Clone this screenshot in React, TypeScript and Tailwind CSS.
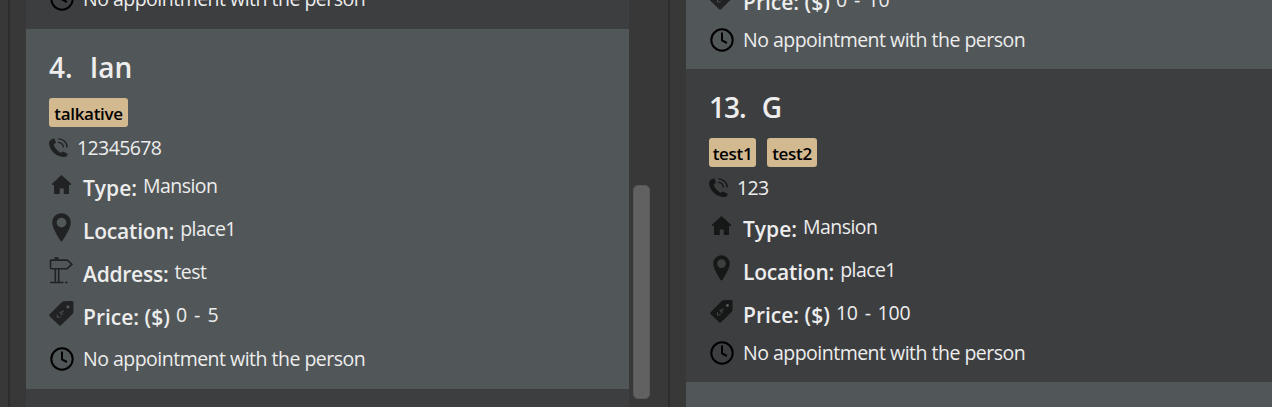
import type { ReactNode } from "react";

type IconProps = { className?: string };

const PhoneIcon = ({ className = "" }: IconProps) => (
  <svg viewBox="0 0 19 19" className={`h-[19px] w-[19px] shrink-0 fill-current ${className}`}>
    <path d="M2.300 1.600 5.300.300 7 4.600 4.800 6.500C5.300 9.600 8.600 13.400 12 14.800l1.900-1.400 4.700 2.300-.3 1.700c-1 1.100-2.300 1.500-3.900 1.500C7.600 18.900.100 12.300.100 5.300.100 3.800.900 2.300 2.300 1.600Z" />
    <path d="M9.300.900c5 .1 8.700 3.600 8.900 8.500M9 4.400c3.100.1 5.200 2.100 5.400 5.100" fill="none" stroke="currentColor" strokeWidth="1.400" />
  </svg>
);

const HomeIcon = ({ className = "" }: IconProps) => (
  <svg viewBox="0 0 19 19" className={`h-[19px] w-[19px] shrink-0 fill-current ${className}`}>
    <path d="M9.500 0 19 8.700V10h-2v9h-5.300v-5.500H7.800V19H2v-9H0V8.700Z" />
  </svg>
);

const PinIcon = ({ className = "" }: IconProps) => (
  <svg viewBox="0 0 19 29" preserveAspectRatio="none" className={`shrink-0 fill-current ${className}`}>
    <path fillRule="evenodd" d="M9.500.3C4.200.3.300 4.400.300 9.500c0 5.500 4.700 12.500 8 18q1.200 1.800 2.400 0c3.300-5.500 8-12.500 8-18C18.700 4.400 14.800.300 9.500.300Zm0 4.400a4.900 4.900 0 1 1 0 9.800 4.900 4.900 0 0 1 0-9.800Z" />
  </svg>
);

const SignIcon = ({ className = "" }: IconProps) => (
  <svg viewBox="0 0 25 27" className={`h-[27px] w-[25px] shrink-0 ${className}`} fill="none" stroke="currentColor" strokeWidth="1.600">
    <path d="M2.200 3.100h16l4.700 4.100-4.700 4.500h-16L1.500 11V3.800ZM6.300 12v13M9.700 12v13M1 25.500h13.500M16 25.500h2.500" />
    <path d="M5.500.200h4v2.500h-4Z" fill="currentColor" stroke="none" />
  </svg>
);

const TagIcon = ({ className = "" }: IconProps) => (
  <svg viewBox="0 0 25 25" className={`shrink-0 fill-current ${className}`}>
    <path d="M13 .9Q13.800.300 14.800.300L23 0q1.500 0 1.500 1.500L24.400 11q0 1-.7 1.700L12 24.200q-1 1-2 0L.6 15.300q-1-1 .1-2Z" />
    <circle cx="18.900" cy="5.900" r="1.600" className="fill-[#545859]" />
    <path d="M8.200 13.500v2.800h2.300M10.300 11.300q1.300-1 1.500.5t.5 2 1.300-.6M13 12.500V10l1.700.3M10.500 16.300l1-1" fill="none" className="stroke-[#545859]" strokeWidth=".9" />
  </svg>
);

const ClockIcon = () => (
  <svg viewBox="0 0 24 24" className="h-6 w-6 shrink-0 text-black" fill="none" stroke="currentColor" strokeWidth="2">
    <circle cx="12" cy="12" r="10.700" />
    <path d="M12 4.500v7.900l4.900 2.600" />
  </svg>
);

const Title = ({ index, name, className = "gap-[17px]" }: { index: string; name: string; className?: string }) => (
  <h2 className={`flex h-[69px] items-start pt-[18px] text-[28px] leading-[40px] font-semibold ${className}`}>
    <span>{index}</span>
    <span>{name}</span>
  </h2>
);

const Badge = ({ className, children }: { className: string; children: ReactNode }) => (
  <span className={`flex h-[29px] items-center justify-center rounded-[3px] bg-[#d2b990] pt-[3px] text-[17px] leading-[24px] font-semibold tracking-[-0.300px] text-black ${className}`}>
    {children}
  </span>
);

const Phone = ({ children, icon, height }: { children: ReactNode; icon: string; height: string }) => (
  <div className={`flex items-start ${height}`}>
    <PhoneIcon className={`mt-[11px] ${icon}`} />
    <span className="ml-[9px] pt-[7px] text-[19.500px] leading-[28px] tracking-[-0.600px]">{children}</span>
  </div>
);

type FieldProps = { icon: ReactNode; label: string; value: string; height: string; labelClass?: string; valueClass?: string };

const Field = ({ icon, label, value, height, labelClass = "tracking-[-0.200px]", valueClass = "tracking-[-0.550px]" }: FieldProps) => (
  <div className={`flex shrink-0 items-start ${height}`}>
    <span className="flex h-[28px] w-[25px] shrink-0 items-center justify-center">{icon}</span>
    <span className={`ml-[9px] pt-[4px] text-[21px] leading-[28px] font-semibold ${labelClass}`}>{label}</span>
    <span className={`ml-[6px] pt-[2px] text-[19.500px] leading-[28px] ${valueClass}`}>{value}</span>
  </div>
);

const Appointment = () => (
  <div className="flex h-[28px] shrink-0 items-center">
    <span className="flex w-[25px] shrink-0 justify-center"><ClockIcon /></span>
    <span className="ml-[9px] text-[19.500px] leading-[28px] tracking-[-0.510px]">No appointment with the person</span>
  </div>
);

export default function App() {
  return (
    <main className="flex h-[407px] w-[1272px] overflow-hidden bg-[#383838] font-['Open_Sans','Noto_Sans',sans-serif] whitespace-nowrap text-[#ededed]">
      <div className="w-[26px] shrink-0 pl-[8px]"><div className="h-full w-[2px] bg-[#2c2c2c]" /></div>
      <section className="flex h-full w-[603px] shrink-0 flex-col overflow-hidden">
        <article className="flex h-[29px] shrink-0 flex-col justify-end bg-[#3d3e40] pb-[16px] pl-[23px]"><Appointment /></article>
        <article className="h-[360px] shrink-0 bg-[#515658] pl-[23px]">
          <Title index="4." name="Ian" />
          <div className="flex gap-[11px]"><Badge className="w-[79px]">talkative</Badge></div>
          <Phone height="h-[43px]" icon="text-[#202224]">12345678</Phone>
          <Field height="h-[43px]" icon={<HomeIcon className="text-[#202224]" />} label="Type:" value="Mansion" labelClass="tracking-normal" />
          <Field height="h-[43px]" icon={<PinIcon className="h-[29px] w-[19px] text-[#202224]" />} label="Location:" value="place1" />
          <Field height="h-[43px]" icon={<SignIcon className="text-[#202224]" />} label="Address:" value="test" labelClass="tracking-[-0.250px]" />
          <Field height="h-[46px]" icon={<TagIcon className="h-[25px] w-[25px] text-[#202224]" />} label="Price: ($)" value="0 - 5" labelClass="tracking-normal" valueClass="[word-spacing:2px]" />
          <Appointment />
        </article>
        <article className="h-[18px] shrink-0 bg-[#3d3e40]" />
      </section>
      <div className="flex w-[57px] shrink-0 pl-[4px]">
        <div className="mt-[185px] h-[214px] w-[17px] rounded-[5px] border border-[#585858] bg-[#616161]" />
        <div className="ml-[18px] h-full w-[2px] bg-[#2c2c2c]" />
      </div>
      <section className="flex h-full w-[586px] shrink-0 flex-col overflow-hidden">
        <article className="flex h-[69px] shrink-0 flex-col justify-end bg-[#515658] pb-[15px] pl-[23px]">
          <Field height="h-[42px]" icon={<TagIcon className="h-[23px] w-[23px] text-[#202224]" />} label="Price: ($)" value="0 - 10" labelClass="tracking-normal" valueClass="[word-spacing:2px]" />
          <Appointment />
        </article>
        <article className="h-[313px] shrink-0 bg-[#3d3e40] pl-[23px]">
          <Title index="13." name="G" className="gap-[16px] tracking-[-1px]" />
          <div className="flex gap-[11px]"><Badge className="w-[47px]">test1</Badge><Badge className="w-[50px]">test2</Badge></div>
          <Phone height="h-[44px]" icon="text-[#161717]">123</Phone>
          <Field height="h-[43px]" icon={<HomeIcon className="text-[#161717]" />} label="Type:" value="Mansion" labelClass="tracking-normal" />
          <Field height="h-[43px]" icon={<PinIcon className="h-[26px] w-[17px] text-[#161717]" />} label="Location:" value="place1" />
          <Field height="h-[42px]" icon={<TagIcon className="h-[23px] w-[23px] text-[#161717]" />} label="Price: ($)" value="10 - 100" labelClass="tracking-normal" valueClass="tracking-[-0.200px] [word-spacing:2px]" />
          <Appointment />
        </article>
        <article className="h-[25px] shrink-0 bg-[#515658]" />
      </section>
    </main>
  );
}
